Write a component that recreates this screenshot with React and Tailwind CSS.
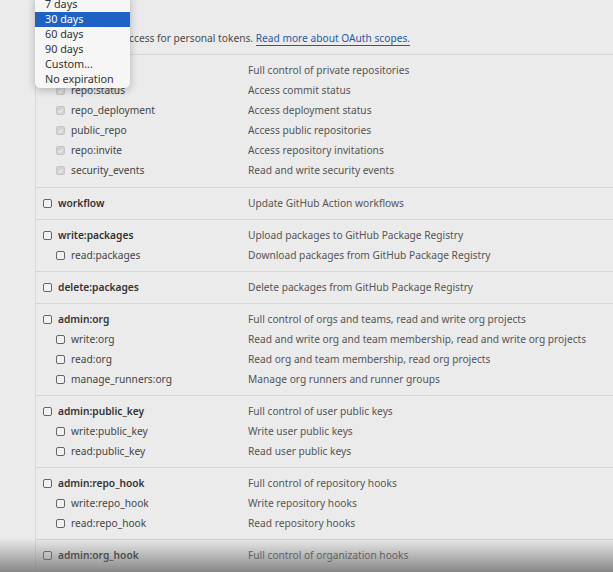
import React from 'react';

const groups = [
  {
    parent: { name: 'repo', desc: 'Full control of private repositories' },
    children: [
      { name: 'repo:status', desc: 'Access commit status' },
      { name: 'repo_deployment', desc: 'Access deployment status' },
      { name: 'public_repo', desc: 'Access public repositories' },
      { name: 'repo:invite', desc: 'Access repository invitations' },
      { name: 'security_events', desc: 'Read and write security events' },
    ],
    checked: true,
  },
  { parent: { name: 'workflow', desc: 'Update GitHub Action workflows' }, children: [] },
  {
    parent: { name: 'write:packages', desc: 'Upload packages to GitHub Package Registry' },
    children: [{ name: 'read:packages', desc: 'Download packages from GitHub Package Registry' }],
  },
  { parent: { name: 'delete:packages', desc: 'Delete packages from GitHub Package Registry' }, children: [] },
  {
    parent: { name: 'admin:org', desc: 'Full control of orgs and teams, read and write org projects' },
    children: [
      { name: 'write:org', desc: 'Read and write org and team membership, read and write org projects' },
      { name: 'read:org', desc: 'Read org and team membership, read org projects' },
      { name: 'manage_runners:org', desc: 'Manage org runners and runner groups' },
    ],
  },
  {
    parent: { name: 'admin:public_key', desc: 'Full control of user public keys' },
    children: [
      { name: 'write:public_key', desc: 'Write user public keys' },
      { name: 'read:public_key', desc: 'Read user public keys' },
    ],
  },
  {
    parent: { name: 'admin:repo_hook', desc: 'Full control of repository hooks' },
    children: [
      { name: 'write:repo_hook', desc: 'Write repository hooks' },
      { name: 'read:repo_hook', desc: 'Read repository hooks' },
    ],
  },
  { parent: { name: 'admin:org_hook', desc: 'Full control of organization hooks' }, children: [] },
];

const options = ['7 days', '30 days', '60 days', '90 days', 'Custom...', 'No expiration'];

function Box({ checked }) {
  if (checked) {
    return (
      <span className="w-[9px] h-[9px] rounded-[2px] bg-[#d2d2d2] border border-[#c6c6c6] flex items-center justify-center flex-shrink-0">
        <svg viewBox="0 0 10 10" className="w-[8px] h-[8px]">
          <path d="M2 5.2l2 2 4-4.4" fill="none" stroke="#f4f4f4" strokeWidth="1.5" />
        </svg>
      </span>
    );
  }
  return <span className="w-[9px] h-[9px] rounded-[2px] border border-[#666] bg-[#f2f2f2] flex-shrink-0" />;
}

function App() {
  return (
    <div className="relative w-[613px] h-[572px] overflow-hidden bg-[#ebebeb] text-[10.2px] text-[#4a4a4a] whitespace-nowrap" style={{ fontFamily: '"Noto Sans", "Open Sans", sans-serif' }}>
      <div className="ml-[35px] border-l border-[#d9d9d9] h-full">
        <div className="h-[54px] flex items-end pb-[8px]">
          <p className="leading-[16px]">
            Scopes define the access for personal tokens.{' '}
            <span className="text-[#2a5aa5] border-b border-[#2a5aa5]">Read more about OAuth scopes.</span>
          </p>
        </div>

        <div className="border-t border-[#d6d6d6]">
          {groups.map((g, i) => (
            <div key={i} className={i === 0 ? 'py-[6px] border-b border-[#d6d6d6]' : 'py-[5.5px] border-b border-[#d6d6d6]'}>
              <div className="flex h-[20px] items-center">
                <div className="w-[212px] pl-[7px] flex items-center gap-[6px]">
                  <Box checked={g.checked} />
                  <span className="font-semibold text-[#333]">{g.parent.name}</span>
                </div>
                <span className="text-[#555]">{g.parent.desc}</span>
              </div>
              {g.children.map((c) => (
                <div key={c.name} className="flex h-[20px] items-center">
                  <div className="w-[212px] pl-[20px] flex items-center gap-[6px]">
                    <Box checked={g.checked} />
                    <span className="text-[#444]">{c.name}</span>
                  </div>
                  <span className="text-[#555]">{c.desc}</span>
                </div>
              ))}
            </div>
          ))}
        </div>
      </div>

      {/* expiration select menu */}
      <div className="absolute left-[35px] top-[-4px] w-[95px] bg-[#f6f6f6] rounded-b-[5px] shadow-[0_2px_8px_rgba(0,0,0,0.25)] py-[1px] text-[10.8px]">
        {options.map((o) => (
          <div
            key={o}
            className={
              o === '30 days'
                ? 'h-[15px] px-[10px] flex items-center bg-[#1f62c6] text-white'
                : 'h-[15px] px-[10px] flex items-center text-[#333]'
            }
          >
            {o}
          </div>
        ))}
      </div>

      {/* video fade at bottom */}
      <div className="absolute left-0 right-0 bottom-0 h-[34px] bg-gradient-to-b from-transparent to-[#6f6f6f] opacity-80 pointer-events-none" />
    </div>
  );
}

export default App;
